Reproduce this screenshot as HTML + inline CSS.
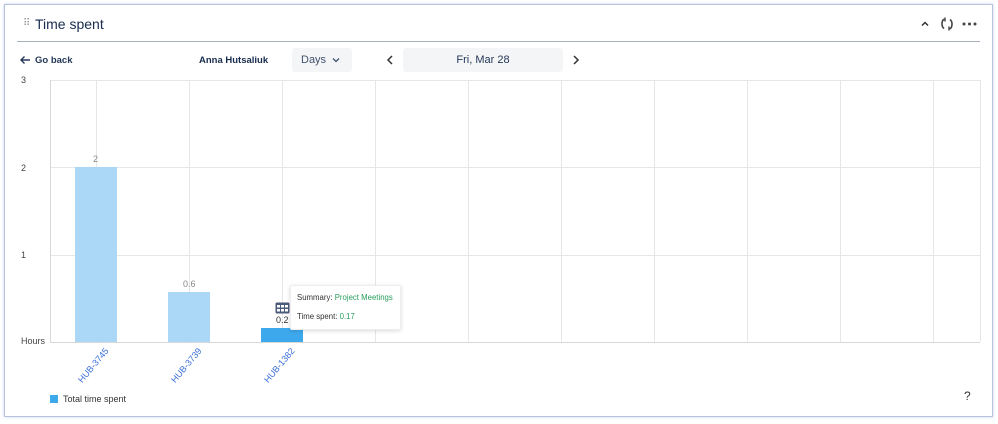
<!DOCTYPE html>
<html><head><meta charset="utf-8"><style>
body{margin:0;width:998px;height:424px;background:#fff;font-family:"Liberation Sans",sans-serif;position:relative;overflow:hidden}
svg{display:block}
.card{position:absolute;left:4px;top:4px;width:987px;height:411px;border:1px solid #b9c4dc;box-shadow:0 0 3px #c8d4f0;background:#fff}
.a{position:absolute}
.t{font-size:9px;color:#444}
.gv{position:absolute;top:80px;height:262px;width:1px;background:#e6e6e6}
.gh{position:absolute;left:50px;width:930px;height:1px;background:#e6e6e6}
.lbl{position:absolute;font-size:9px;color:#3b6fd8;transform:rotate(-50deg);transform-origin:right top;white-space:nowrap}
</style></head><body>
<div class="card"></div>
<div class="a" style="left:23px;top:18px;font-size:10px;color:#999;letter-spacing:-1px">⠿</div>
<div class="a" style="left:35px;top:16px;font-size:14px;color:#172b4d">Time spent</div>
<div class="a" style="left:17px;top:41px;width:963px;height:1px;background:#a9b0bd"></div>
<svg class="a" style="left:920px;top:20px" width="10" height="8" viewBox="0 0 10 8"><path d="M2 5.5L5 2.5L8 5.5" stroke="#333" stroke-width="1.5" fill="none"/></svg>
<svg class="a" style="left:939px;top:16px" width="16" height="16" viewBox="0 0 16 16"><path d="M6 3.5H4.5Q3 5 3 8Q3 11 5 12.5M10 12.5H11.5Q13 11 13 8Q13 5 11 3.5" stroke="#444" stroke-width="1.6" fill="none"/><path d="M6 1.5V5.5M10 10.5V14.5" stroke="#444" stroke-width="1.4"/></svg>
<svg class="a" style="left:962px;top:21px" width="16" height="6"><circle cx="2" cy="3" r="1.5" fill="#444"/><circle cx="7.5" cy="3" r="1.5" fill="#444"/><circle cx="13" cy="3" r="1.5" fill="#444"/></svg>
<svg class="a" style="left:19px;top:55px" width="12" height="10"><path d="M11 5H2M5.5 1.5L2 5L5.5 8.5" stroke="#253858" stroke-width="1.4" fill="none"/></svg>
<div class="a" style="left:35px;top:55px;font-size:9.5px;font-weight:bold;color:#253858">Go back</div>
<div class="a" style="left:199px;top:55px;font-size:9.5px;font-weight:bold;color:#172b4d">Anna Hutsaliuk</div>
<div class="a" style="left:292px;top:48px;width:60px;height:24px;background:#f4f5f7;border-radius:3px"></div>
<div class="a" style="left:301px;top:54px;font-size:11px;color:#42526e">Days</div>
<svg class="a" style="left:332px;top:57px" width="8" height="6"><path d="M1 1.5L4 4.5L7 1.5" stroke="#42526e" stroke-width="1.3" fill="none"/></svg>
<svg class="a" style="left:386px;top:55px" width="8" height="10"><path d="M6 1L2 5L6 9" stroke="#333" stroke-width="1.5" fill="none"/></svg>
<div class="a" style="left:403px;top:48px;width:160px;height:24px;background:#f4f5f7;border-radius:3px;text-align:center;line-height:24px;font-size:11px;color:#253858">Fri, Mar 28</div>
<svg class="a" style="left:572px;top:55px" width="8" height="10"><path d="M2 1L6 5L2 9" stroke="#333" stroke-width="1.5" fill="none"/></svg>
<div class="a t" style="left:21px;top:75px">3</div>
<div class="a t" style="left:21px;top:163px">2</div>
<div class="a t" style="left:21px;top:250px">1</div>
<div class="a t" style="left:21px;top:336px">Hours</div>
<div class="gh" style="top:80px"></div><div class="gh" style="top:167px"></div><div class="gh" style="top:255px"></div>
<div class="gh" style="top:342px;background:#d8d8d8"></div>
<div class="gv" style="left:50px;background:#d8d8d8"></div>
<div class="gv" style="left:96px"></div><div class="gv" style="left:189px"></div><div class="gv" style="left:282px"></div><div class="gv" style="left:375px"></div><div class="gv" style="left:468px"></div><div class="gv" style="left:561px"></div><div class="gv" style="left:654px"></div><div class="gv" style="left:747px"></div><div class="gv" style="left:840px"></div><div class="gv" style="left:933px"></div><div class="gv" style="left:980px"></div>
<div class="a" style="left:75px;top:167px;width:42px;height:175px;background:#a6d6f5;opacity:.95"></div>
<div class="a" style="left:168px;top:292px;width:42px;height:50px;background:#a6d6f5;opacity:.95"></div>
<div class="a" style="left:261px;top:328px;width:42px;height:14px;background:#3ea8ed"></div>
<div class="a" style="left:93px;top:154px;font-size:9px;color:#888">2</div>
<div class="a" style="left:183px;top:279px;font-size:9px;color:#888">0.6</div>
<div class="a" style="left:276px;top:315px;font-size:9px;color:#333">0.2</div>
<svg class="a" style="left:275px;top:302px" width="15" height="12" viewBox="0 0 15 12"><rect x="0.5" y="0.5" width="14" height="11" rx="1.5" fill="#4a5a78"/><g fill="#fff"><rect x="2" y="3" width="3" height="2.5"/><rect x="6" y="3" width="3" height="2.5"/><rect x="10" y="3" width="3" height="2.5"/><rect x="2" y="7" width="3" height="2.5"/><rect x="6" y="7" width="3" height="2.5"/><rect x="10" y="7" width="3" height="2.5"/></g></svg>
<div class="a" style="left:290px;top:285px;width:109px;height:43px;background:#fff;border:1px solid #eee;box-shadow:0 1px 4px rgba(0,0,0,.15);border-radius:2px"></div>
<div class="a" style="left:297px;top:293px;font-size:7.8px;color:#333">Summary: <span style="color:#2a9d5c">Project Meetings</span></div>
<div class="a" style="left:297px;top:312px;font-size:7.8px;color:#333">Time spent: <span style="color:#2a9d5c">0.17</span></div>
<div class="lbl" style="left:61px;top:346px">HUB-3745</div>
<div class="lbl" style="left:154px;top:346px">HUB-3739</div>
<div class="lbl" style="left:247px;top:346px">HUB-1382</div>
<div class="a" style="left:50px;top:395px;width:8px;height:8px;background:#3ea8ed"></div>
<div class="a" style="left:63px;top:394px;font-size:9px;color:#333">Total time spent</div>
<div class="a" style="left:964px;top:389px;font-size:12px;color:#333">?</div>
</body></html>
